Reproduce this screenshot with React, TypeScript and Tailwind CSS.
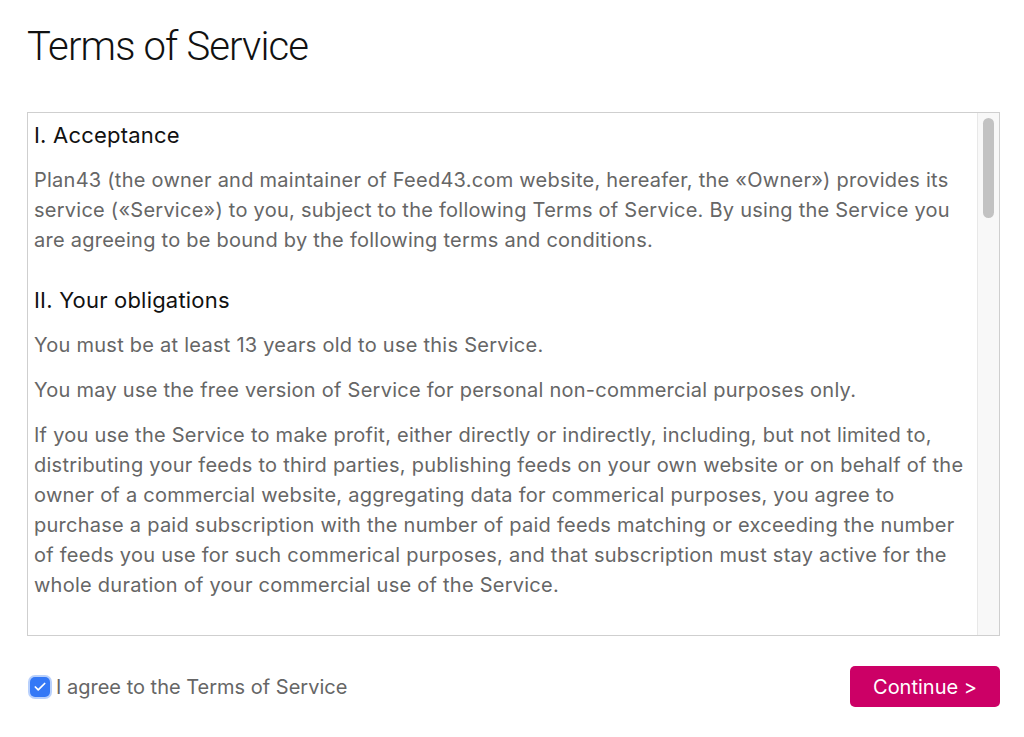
import { Check } from 'lucide-react';

export default function App() {
  const sections = [
    {
      title: 'I. Acceptance',
      paragraphs: [
        'Plan43 (the owner and maintainer of Feed43.com website, hereafer, the «Owner») provides its service («Service») to you, subject to the following Terms of Service. By using the Service you are agreeing to be bound by the following terms and conditions.',
      ],
    },
    {
      title: 'II. Your obligations',
      paragraphs: [
        'You must be at least 13 years old to use this Service.',
        'You may use the free version of Service for personal non-commercial purposes only.',
        'If you use the Service to make profit, either directly or indirectly, including, but not limited to, distributing your feeds to third parties, publishing feeds on your own website or on behalf of the owner of a commercial website, aggregating data for commerical purposes, you agree to purchase a paid subscription with the number of paid feeds matching or exceeding the number of feeds you use for such commerical purposes, and that subscription must stay active for the whole duration of your commercial use of the Service.',
      ],
    },
  ];

  return (
    <div className="min-h-screen bg-white pl-[27px] pr-[24px] pt-[22px] font-['Inter',sans-serif]">
      <h1 className="text-[40px] leading-[50px] font-light text-[#111] tracking-[-0.85px] font-['Roboto',sans-serif]">
        Terms of Service
      </h1>

      {/* Terms box with its scrollbar */}
      <div className="mt-[40px] h-[524px] border border-[#cfcfcf] flex bg-white">
        <div className="flex-1 overflow-hidden pl-[6px] pr-[4px] pt-[7px]">
          {sections.map((section, i) => (
            <div key={i}>
              <h3 className={`text-[22px] leading-[30px] tracking-[0.2px] text-[#111] mb-[15px] ${i === 0 ? '' : 'mt-[30px]'}`}>
                {section.title}
              </h3>
              {section.paragraphs.map((p, j) => (
                <p key={j} className="text-[20px] leading-[30px] tracking-[0.25px] text-[#666] mb-[15px]">
                  {p}
                </p>
              ))}
            </div>
          ))}
        </div>
        <div className="w-[22px] bg-[#f8f8f8] border-l border-[#e8e8e8] pt-[5px] flex justify-center">
          <div className="w-[11px] h-[100px] rounded-full bg-[#c2c2c2]" />
        </div>
      </div>

      {/* Footer */}
      <div className="mt-[30px] flex items-center justify-between">
        <label className="flex items-center gap-[6px] text-[20px] leading-[28px] text-[#666] ml-[3px]">
          <span className="w-[20px] h-[20px] shrink-0 rounded-[5px] bg-[#3478f6] flex items-center justify-center shadow-[0_0_0_2px_rgba(52,120,246,0.35)]">
            <Check size={14} strokeWidth={3} className="text-white" />
          </span>
          <span>I agree to the Terms of Service</span>
        </label>
        <button className="w-[150px] h-[41px] rounded-[5px] bg-[#cc0066] text-white text-[20px]">
          Continue &gt;
        </button>
      </div>
    </div>
  );
}
